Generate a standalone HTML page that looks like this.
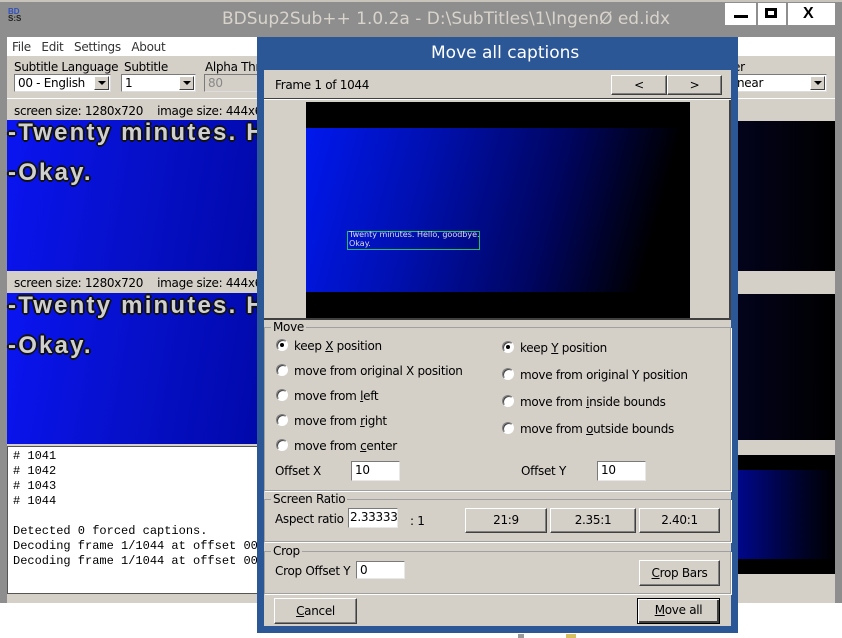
<!DOCTYPE html>
<html><head><meta charset="utf-8"><style>
*{margin:0;padding:0;box-sizing:border-box}
body{width:842px;height:638px;overflow:hidden;background:#fff;font-family:"DejaVu Sans","Liberation Sans",sans-serif;font-size:12px;color:#000;position:relative}
.a{position:absolute}
.t{position:absolute;white-space:nowrap;font-size:12px;line-height:14px;letter-spacing:-0.3px}
.combo{position:absolute;background:#fff;border:1px solid #7a7a7a;border-right-color:#ddd;border-bottom-color:#ddd;height:18px}
.combo .v{position:absolute;left:3px;top:1px;white-space:nowrap;letter-spacing:-0.3px}
.combo .b{position:absolute;right:1px;top:1px;width:15px;height:14px;background:#d4d0c8;border:1px solid #fff;border-right-color:#404040;border-bottom-color:#404040}
.combo .b:after{content:"";position:absolute;left:3px;top:4px;border-left:4px solid transparent;border-right:4px solid transparent;border-top:4px solid #000}
.blue1{background:linear-gradient(100deg,#0a14f2 0%,#0610c8 50%,#0008a8 100%)}
.sub{position:absolute;left:8px;font:bold 24px "Liberation Sans",sans-serif;color:#d0d0d0;letter-spacing:2.2px;white-space:nowrap;text-shadow:-2px 0 #111,2px 0 #111,0 -2px #111,0 2px #111,-1px -1px #111,1px 1px #111,1px -1px #111,-1px 1px #111}
.btn{position:absolute;background:#d4d0c8;border:1px solid #fff;border-right-color:#404040;border-bottom-color:#404040;box-shadow:inset -1px -1px #808080;text-align:center;letter-spacing:-0.3px}
.inp{position:absolute;background:#fff;border:1px solid #7a7a7a;border-right-color:#e8e8e8;border-bottom-color:#e8e8e8;padding-left:3px;line-height:16px;letter-spacing:-0.3px}
.grp{position:absolute;border:1px solid #a0a0a0;box-shadow:1px 1px #fff}
.grp .gl{position:absolute;left:8px;top:-8px;background:#d4d0c8;padding:0 2px;line-height:14px;letter-spacing:-0.3px}
.r{position:absolute;width:12px;height:12px;border-radius:50%;background:#fff;border:1px solid #808080;border-right-color:#fff;border-bottom-color:#fff;box-shadow:inset 1px 1px #404040}
.r.on:after{content:"";position:absolute;left:3px;top:3px;width:4px;height:4px;border-radius:50%;background:#000}
.mono{font-family:"Liberation Mono",monospace;font-size:12px;line-height:15px;white-space:pre}
</style></head><body>
<div class="a" style="left:0;top:0;width:842px;height:603px;background:#8e8e8e"></div>
<div class="a" style="left:0;top:0;width:842px;height:2px;background:#c8c4bc"></div>
<div class="a" style="left:8px;top:8px;width:16px;height:16px;font:bold 8px 'Liberation Sans';color:#3050c0;line-height:7px">BD<br><span style="color:#222">S:S</span></div>
<div class="t" style="left:222px;top:9px;font-size:17px;line-height:20px;color:#d8d4cc;letter-spacing:0">BDSup2Sub++ 1.0.2a - D:\SubTitles\1\IngenØ ed.idx</div>
<div class="a" style="left:725px;top:3px;width:110px;height:22px;background:#fff"></div>
<div class="a" style="left:756px;top:3px;width:2px;height:22px;background:#8e8e8e"></div>
<div class="a" style="left:786px;top:3px;width:2px;height:22px;background:#8e8e8e"></div>
<div class="a" style="left:734px;top:15px;width:14px;height:3px;background:#000"></div>
<div class="a" style="left:765px;top:8px;width:12px;height:10px;border:3px solid #000"></div>
<div class="t" style="left:803px;top:5px;font:bold 16px 'Liberation Sans';color:#000">X</div>
<div class="a" style="left:7px;top:37px;width:828px;height:19px;background:#fff"></div>
<div class="t" style="left:12px;top:40px;color:#333">File&nbsp;&nbsp; Edit&nbsp;&nbsp; Settings&nbsp;&nbsp; About</div>
<div class="a" style="left:7px;top:56px;width:828px;height:547px;background:#d4d0c8"></div>
<div class="t" style="left:14px;top:60px">Subtitle Language</div>
<div class="t" style="left:124px;top:60px">Subtitle</div>
<div class="t" style="left:205px;top:60px">Alpha Thr</div>
<div class="t" style="left:733px;top:60px">er</div>
<div class="combo" style="left:14px;top:74px;width:97px"><span class="v">00 - English</span><span class="b"></span></div>
<div class="combo" style="left:121px;top:74px;width:75px"><span class="v">1</span><span class="b"></span></div>
<div class="combo" style="left:204px;top:74px;width:60px;background:#d4d0c8"><span class="v" style="color:#888">80</span></div>
<div class="combo" style="left:728px;top:74px;width:99px"><span class="v" style="left:8px">near</span><span class="b"></span></div>
<div class="a" style="left:7px;top:98px;width:828px;height:1px;background:#fff"></div>
<div class="t" style="left:14px;top:104px">screen size: 1280x720&nbsp;&nbsp;&nbsp; image size: 444x66</div>
<div class="a blue1" style="left:7px;top:120px;width:260px;height:151px"></div>
<div class="sub" style="top:119px">-Twenty minutes. H</div>
<div class="sub" style="top:159px">-Okay.</div>
<div class="t" style="left:14px;top:276px">screen size: 1280x720&nbsp;&nbsp;&nbsp; image size: 444x66</div>
<div class="a blue1" style="left:7px;top:293px;width:260px;height:151px"></div>
<div class="sub" style="top:292px">-Twenty minutes. H</div>
<div class="sub" style="top:332px">-Okay.</div>
<div class="a" style="left:7px;top:446px;width:255px;height:148px;background:#fff;border:1px solid #555;border-right:none"></div>
<div class="a mono" style="left:13px;top:449px"># 1041
# 1042
# 1043
# 1044

Detected 0 forced captions.
Decoding frame 1/1044 at offset 000
Decoding frame 1/1044 at offset 000</div>
<div class="a" style="left:738px;top:121px;width:97px;height:150px;background:linear-gradient(90deg,#03031c,#000)"></div>
<div class="a" style="left:738px;top:294px;width:97px;height:146px;background:linear-gradient(90deg,#03031c,#000)"></div>
<div class="a" style="left:738px;top:455px;width:97px;height:119px;background:#000"></div>
<div class="a" style="left:738px;top:470px;width:97px;height:89px;background:linear-gradient(90deg,#00078a,#000330 60%,#000)"></div>
<div class="a" style="left:257px;top:37px;width:481px;height:596px;background:#2b5797"></div>
<div class="t" style="left:431px;top:43px;font-size:17px;line-height:20px;color:#fff;letter-spacing:0">Move all captions</div>
<div class="a" style="left:264px;top:70px;width:467px;height:556px;background:#d4d0c8"></div>
<div class="t" style="left:275px;top:78px">Frame 1 of 1044</div>
<div class="btn" style="left:611px;top:75px;width:56px;height:20px;line-height:18px">&lt;</div>
<div class="btn" style="left:667px;top:75px;width:55px;height:20px;line-height:18px">&gt;</div>
<div class="a" style="left:264px;top:98px;width:467px;height:2px;background:#404040;border-bottom:1px solid #fff"></div>
<div class="a" style="left:729px;top:100px;width:2px;height:218px;background:#404040"></div>
<div class="a" style="left:306px;top:102px;width:384px;height:216px;background:#000"></div>
<div class="a" style="left:306px;top:128px;width:384px;height:164px;background:linear-gradient(105deg,#0018ee 0%,#0010b0 30%,#000560 62%,#000 88%)"></div>
<div class="a" style="left:347px;top:231px;width:133px;height:19px;border:1px solid #20c060"></div>
<div class="t" style="left:349px;top:230px;font-size:8px;line-height:9px;color:#ddd;letter-spacing:0">Twenty minutes. Hello, goodbye.<br>Okay.</div>
<div class="a" style="left:264px;top:318px;width:467px;height:2px;background:#404040"></div>
<div class="grp" style="left:264px;top:327px;width:467px;height:164px"><span class="gl" style="left:6px">Move</span></div>
<div class="r on" style="left:276px;top:339px"></div><div class="t" style="left:294px;top:339px">keep <u>X</u> position</div>
<div class="r" style="left:276px;top:364px"></div><div class="t" style="left:294px;top:364px">move from original X position</div>
<div class="r" style="left:276px;top:389px"></div><div class="t" style="left:294px;top:389px">move from <u>l</u>eft</div>
<div class="r" style="left:276px;top:414px"></div><div class="t" style="left:294px;top:414px">move from <u>r</u>ight</div>
<div class="r" style="left:276px;top:439px"></div><div class="t" style="left:294px;top:439px">move from <u>c</u>enter</div>
<div class="r on" style="left:502px;top:341px"></div><div class="t" style="left:520px;top:341px">keep <u>Y</u> position</div>
<div class="r" style="left:502px;top:368px"></div><div class="t" style="left:520px;top:368px">move from original Y position</div>
<div class="r" style="left:502px;top:395px"></div><div class="t" style="left:520px;top:395px">move from <u>i</u>nside bounds</div>
<div class="r" style="left:502px;top:422px"></div><div class="t" style="left:520px;top:422px">move from <u>o</u>utside bounds</div>
<div class="t" style="left:275px;top:464px">Offset X</div>
<div class="inp" style="left:351px;top:461px;width:49px;height:20px">10</div>
<div class="t" style="left:521px;top:464px">Offset Y</div>
<div class="inp" style="left:597px;top:461px;width:49px;height:20px">10</div>
<div class="grp" style="left:264px;top:499px;width:467px;height:43px"><span class="gl" style="left:6px">Screen Ratio</span></div>
<div class="t" style="left:275px;top:512px">Aspect ratio</div>
<div class="inp" style="left:348px;top:508px;width:50px;height:20px;padding-left:1px">2.33333</div>
<div class="t" style="left:410px;top:514px">: 1</div>
<div class="btn" style="left:465px;top:508px;width:82px;height:25px;line-height:23px">21:9</div>
<div class="btn" style="left:550px;top:508px;width:86px;height:25px;line-height:23px">2.35:1</div>
<div class="btn" style="left:639px;top:508px;width:81px;height:25px;line-height:23px">2.40:1</div>
<div class="grp" style="left:264px;top:551px;width:467px;height:43px"><span class="gl" style="left:6px">Crop</span></div>
<div class="t" style="left:275px;top:564px">Crop Offset Y</div>
<div class="inp" style="left:356px;top:561px;width:49px;height:18px">0</div>
<div class="btn" style="left:639px;top:560px;width:81px;height:26px;line-height:24px"><u>C</u>rop Bars</div>
<div class="btn" style="left:274px;top:598px;width:83px;height:26px;line-height:24px"><u>C</u>ancel</div>
<div class="btn" style="left:637px;top:598px;width:83px;height:26px;line-height:22px;border:1px solid #000;box-shadow:inset 1px 1px #fff,inset -2px -2px #404040"><u>M</u>ove all</div>
<div class="a" style="left:518px;top:634px;width:6px;height:4px;background:#999"></div>
<div class="a" style="left:566px;top:634px;width:10px;height:4px;background:#d8c060"></div>
</body></html>
